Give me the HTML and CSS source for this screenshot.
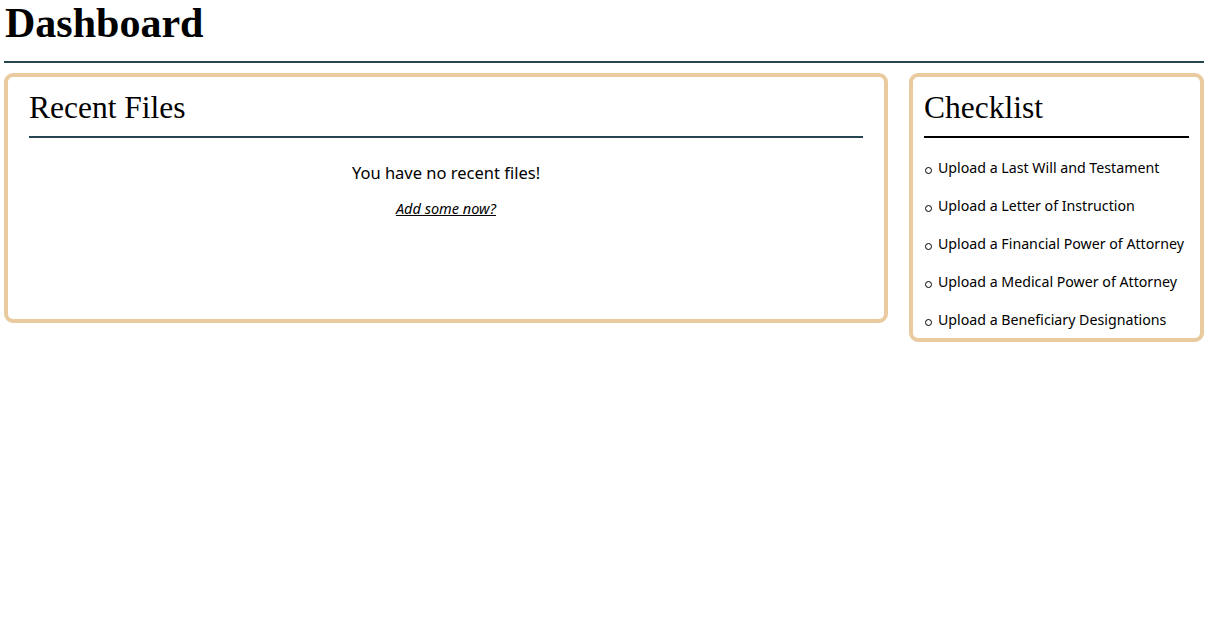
FILE: index.html
```html
<!DOCTYPE html>
<html lang="en">
<head>
<meta charset="utf-8">
<title>Dashboard</title>
<link rel="stylesheet" href="styles.css">
</head>
<body>
<h1 class="page-title">Dashboard</h1>
<main class="layout">
  <section class="card recent">
    <h2 class="card-title">Recent Files</h2>
    <p class="empty">You have no recent files!</p>
    <p class="add"><a href="#">Add some now?</a></p>
  </section>
  <section class="card checklist">
    <h2 class="card-title dark">Checklist</h2>
    <ul class="items">
      <li>Upload a Last Will and Testament</li>
      <li>Upload a Letter of Instruction</li>
      <li>Upload a Financial Power of Attorney</li>
      <li>Upload a Medical Power of Attorney</li>
      <li>Upload a Beneficiary Designations</li>
    </ul>
  </section>
</main>
</body>
</html>
```
FILE: styles.css
```css
html, body {
  margin: 0;
  background: #ffffff;
}
body {
  padding: 0 8px 0 4px;
  font-family: "Noto Sans", "Open Sans", sans-serif;
  color: #000;
}
.page-title {
  margin: 0;
  font-family: "Liberation Serif", serif;
  font-weight: bold;
  font-size: 42px;
  line-height: 46px;
  padding: 0 0 15px 1px;
  border-bottom: 2px solid #264653;
}
.layout {
  display: grid;
  grid-template-columns: 1fr 295px;
  gap: 21px;
  align-items: start;
  margin-top: 10px;
}
.card {
  border: 4px solid #eacba0;
  border-radius: 9px;
  box-sizing: border-box;
}
.recent {
  min-height: 250px;
  padding: 14px 21px 10px 21px;
}
.checklist {
  padding: 14px 11px 8px 11px;
}
.card-title {
  margin: 0;
  font-family: "Liberation Serif", serif;
  font-weight: normal;
  font-size: 31.5px;
  line-height: 34px;
  padding-bottom: 11px;
  border-bottom: 2px solid #264653;
}
.card-title.dark {
  border-bottom-color: #000;
}
.empty {
  margin: 24px 0 0;
  text-align: center;
  font-size: 16.5px;
  line-height: 22px;
}
.add {
  margin: 14px 0 0;
  text-align: center;
  font-size: 14.5px;
  line-height: 20px;
}
.add a {
  color: #000;
  font-style: italic;
  text-decoration: underline;
}
.items {
  list-style: none;
  margin: 0;
  padding: 2px 0 0;
}
.items li {
  margin-top: 18px;
  font-size: 14.2px;
  line-height: 20px;
  white-space: nowrap;
  display: flex;
  align-items: baseline;
}
.items li::before {
  content: "";
  flex: none;
  width: 5px;
  height: 5px;
  border: 1.5px solid #000;
  border-radius: 50%;
  margin: 0 6px 0 1px;
  position: relative;
  top: 1px;
}
```
